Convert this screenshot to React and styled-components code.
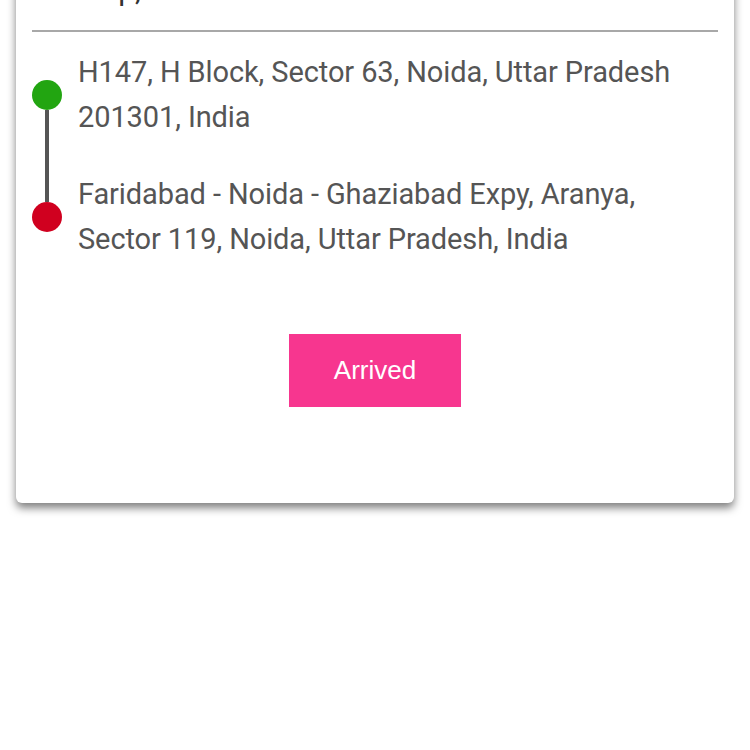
import React from "react";
import styled, { createGlobalStyle } from "styled-components";

const stops = [
  {
    id: "pickup",
    color: "#22a511",
    address: "H147, H Block, Sector 63, Noida, Uttar Pradesh 201301, India",
  },
  {
    id: "drop",
    color: "#d0001f",
    address:
      "Faridabad - Noida - Ghaziabad Expy, Aranya, Sector 119, Noida, Uttar Pradesh, India",
  },
];

const GlobalStyle = createGlobalStyle`
  html, body {
    margin: 0;
    padding: 0;
    background: #ffffff;
  }
  body {
    font-family: Roboto, "Noto Sans", sans-serif;
  }
  #root {
    padding-bottom: 40px;
  }
`;

const Card = styled.section`
  margin: -53px 16px 0;
  padding: 20px 16px 96px;
  background: #ffffff;
  border-radius: 6px;
  box-shadow: 0 5px 9px rgba(0, 0, 0, 0.5);
`;

const Title = styled.h2`
  margin: 0 0 18px 52px;
  font-size: 30px;
  line-height: 45px;
  font-weight: 400;
  color: #333;
`;

const Divider = styled.hr`
  margin: 0;
  border: none;
  height: 2px;
  background: #a8a8a8;
`;

const Route = styled.div`
  display: flex;
  gap: 16px;
  margin-top: 18px;
`;

const Track = styled.div`
  display: flex;
  flex-direction: column;
  align-items: center;
  width: 30px;
  padding: 30px 0;
`;

const Dot = styled.span`
  width: 30px;
  height: 30px;
  border-radius: 50%;
  background: ${(props) => props.color};
  flex-shrink: 0;
`;

const Line = styled.span`
  flex: 1;
  width: 4px;
  background: #555;
`;

const Addresses = styled.div`
  flex: 1;
  display: flex;
  flex-direction: column;
  gap: 32px;
  padding-right: 30px;
`;

const Address = styled.p`
  margin: 0;
  font-size: 29px;
  line-height: 45px;
  color: #555;
  letter-spacing: -0.1px;
`;

const Actions = styled.div`
  display: flex;
  justify-content: center;
  margin-top: 72px;
`;

const Button = styled.button`
  width: 172px;
  height: 73px;
  border: none;
  background: #f7368f;
  color: #ffffff;
  font-family: "Liberation Sans", Arial, sans-serif;
  font-size: 26px;
  cursor: pointer;
`;

const App = () => {
  return (
    <>
      <GlobalStyle />
      <Card>
        <Title>Trip, 12:30 AM</Title>
        <Divider />
        <Route>
          <Track>
            <Dot color={stops[0].color} />
            <Line />
            <Dot color={stops[1].color} />
          </Track>
          <Addresses>
            {stops.map((stop) => (
              <Address key={stop.id}>{stop.address}</Address>
            ))}
          </Addresses>
        </Route>
        <Actions>
          <Button type="button">Arrived</Button>
        </Actions>
      </Card>
    </>
  );
};

export default App;
